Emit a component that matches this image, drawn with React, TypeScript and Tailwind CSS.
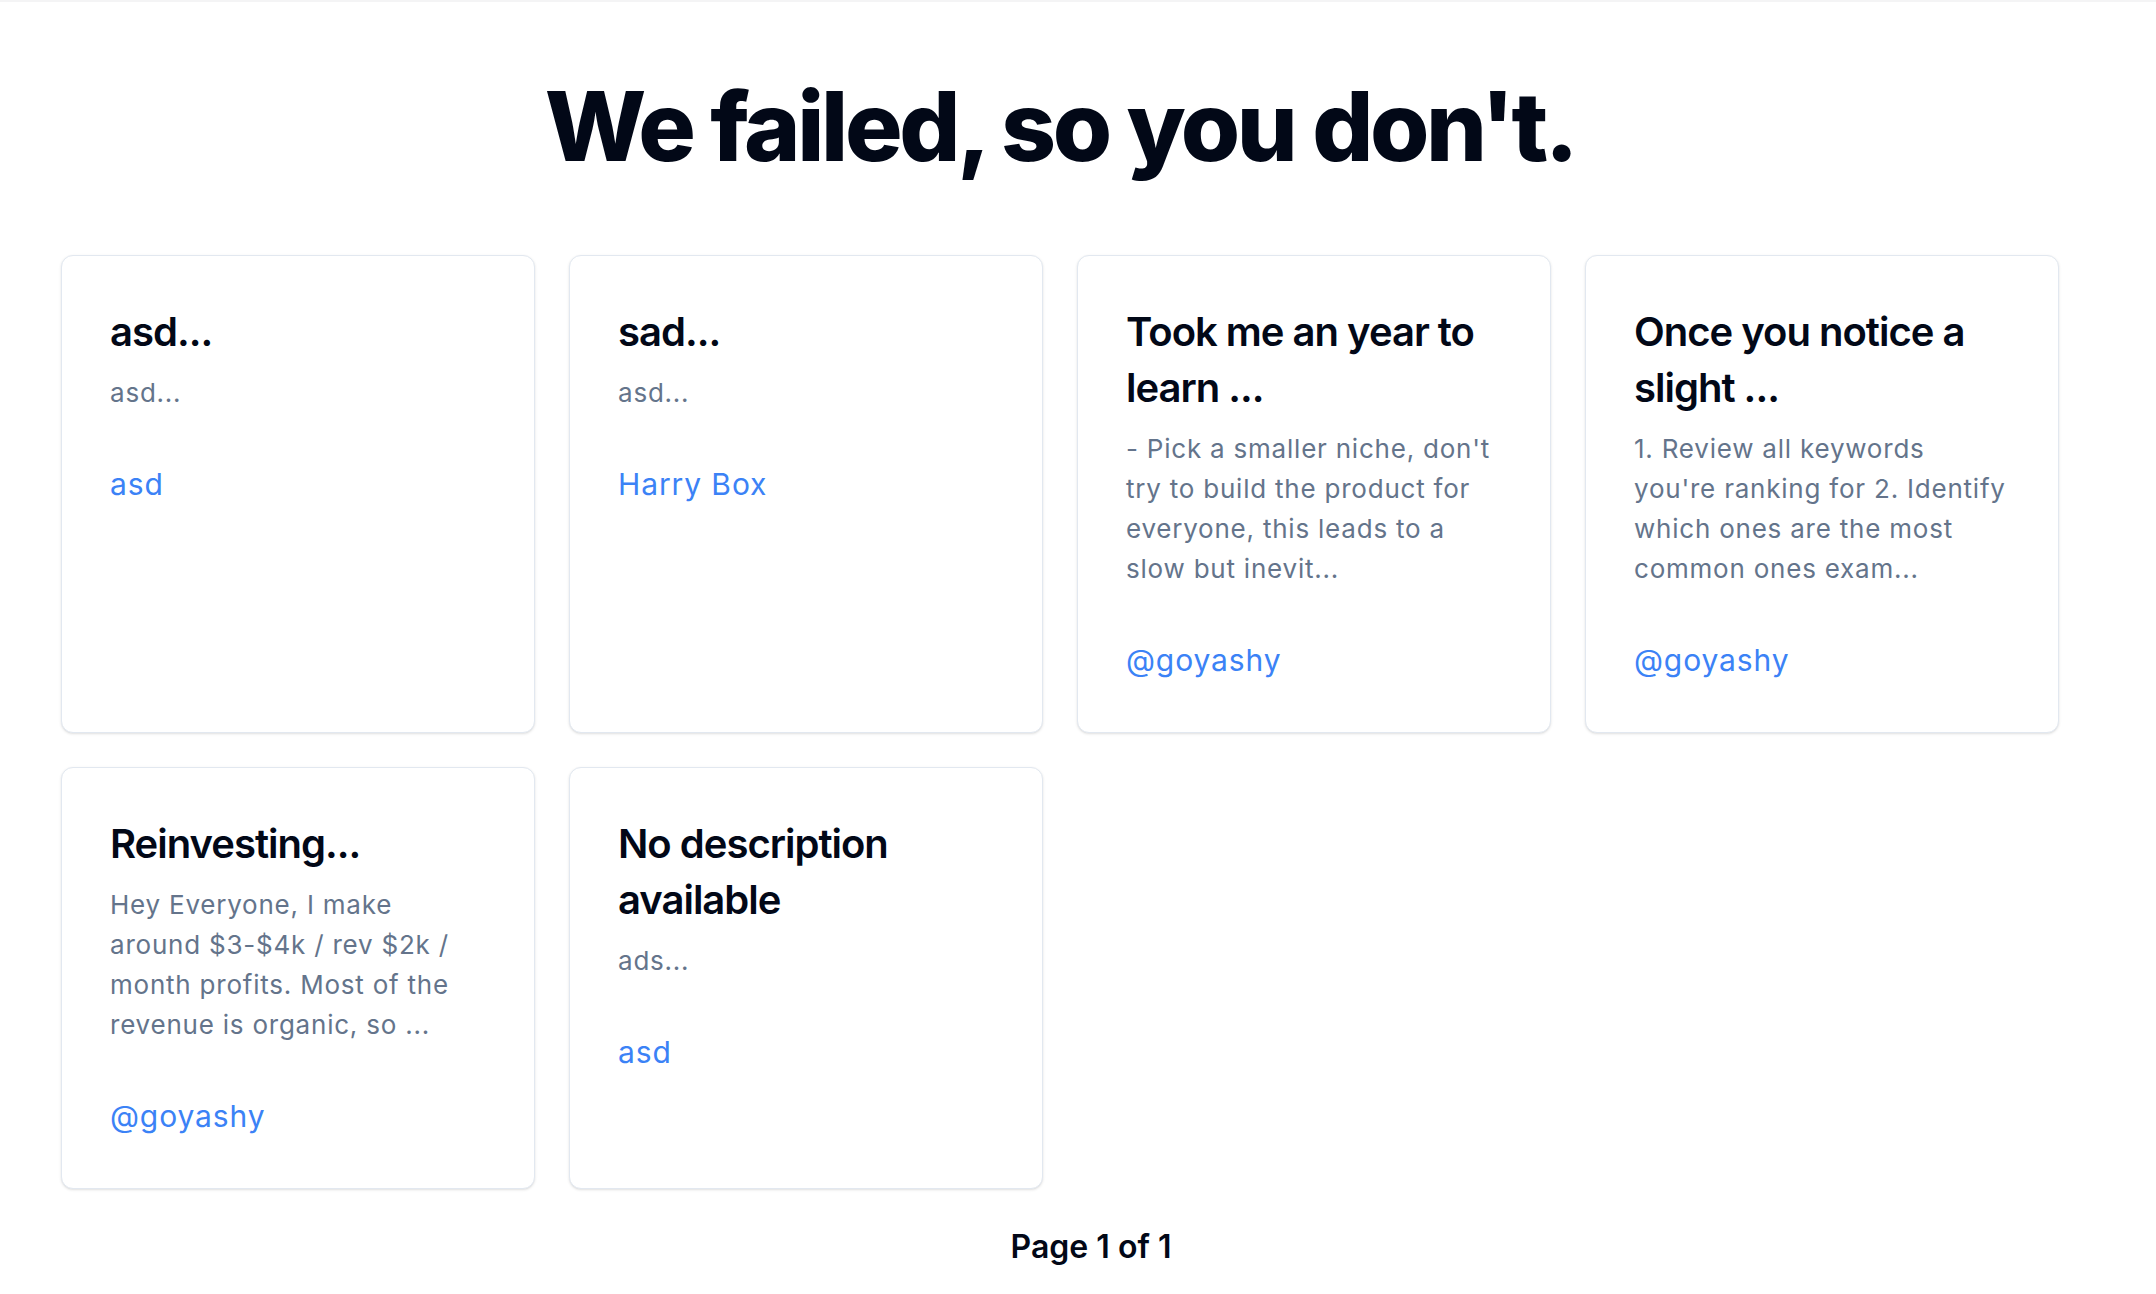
type Post = {
  title: string;
  description: string;
  author: string;
};

const posts: Post[] = [
  { title: "asd...", description: "asd...", author: "asd" },
  { title: "sad...", description: "asd...", author: "Harry Box" },
  {
    title: "Took me an year to learn ...",
    description:
      "- Pick a smaller niche, don't try to build the product for everyone, this leads to a slow but inevit...",
    author: "@goyashy",
  },
  {
    title: "Once you notice a slight ...",
    description:
      "1. Review all keywords you're ranking for 2. Identify which ones are the most common ones exam...",
    author: "@goyashy",
  },
  {
    title: "Reinvesting...",
    description:
      "Hey Everyone, I make around $3-$4k / rev $2k / month profits. Most of the revenue is organic, so ...",
    author: "@goyashy",
  },
  { title: "No description available", description: "ads...", author: "asd" },
];

function PostCard({ post }: { post: Post }) {
  return (
    <div className="rounded-xl border border-[#e2e8f0] bg-white px-12 pt-12 pb-[49px] shadow-sm">
      <h3 className="text-[40px] font-semibold leading-[56px] tracking-tight text-[#020817]">
        {post.title}
      </h3>
      <p className="mt-[13px] text-[26px] leading-[40px] tracking-[0.03em] text-[#64748b]">
        {post.description}
      </p>
      <a
        href="#"
        className="mt-[48px] block text-[30px] leading-[46px] tracking-[0.03em] text-[#3b82f6]"
      >
        {post.author}
      </a>
    </div>
  );
}

export default function App() {
  return (
    <div className="min-h-screen bg-white font-['Inter',sans-serif]">
      <div className="h-[2px] bg-[#f4f4f5]" />
      <div className="pl-[61px] pr-[97px] pt-[76px]">
        <h1 className="text-center text-8xl font-extrabold leading-none tracking-[-0.035em] text-[#020817]">
          We failed, so you don't.
        </h1>
        <div className="mt-[81px] grid grid-cols-4 gap-[34px]">
          {posts.map((post, i) => (
            <PostCard key={i} post={post} />
          ))}
        </div>
      </div>
      <div className="mt-[38px] flex justify-center pl-[26px]">
        <span className="text-[32px] font-semibold leading-[40px] text-[#020817]">
          Page 1 of 1
        </span>
      </div>
    </div>
  );
}
